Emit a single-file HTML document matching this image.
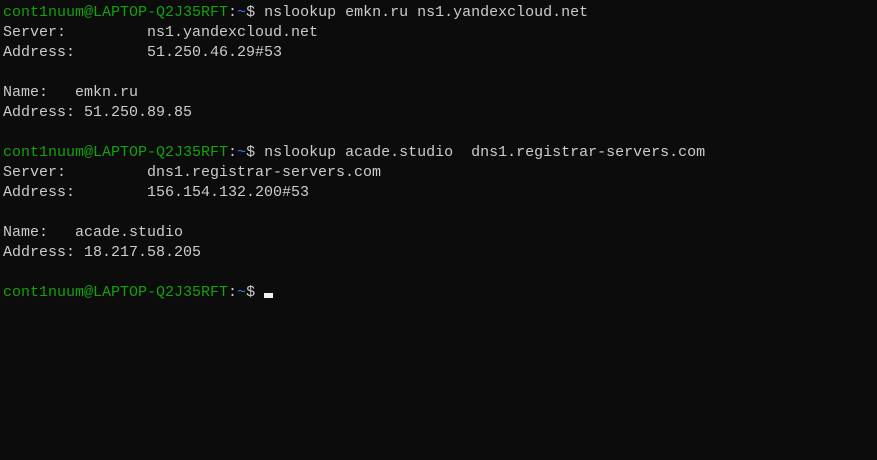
<!DOCTYPE html>
<html><head><style>
html,body{margin:0;padding:0;background:#0c0c0c;width:877px;height:460px;overflow:hidden}
pre{margin:0;position:absolute;left:3px;top:3px;font-family:"Liberation Mono",monospace;font-size:15px;line-height:20px;color:#cccccc;white-space:pre}
.g{color:#13a10e}.b{color:#3b78ff}
.cur{display:inline-block;width:9px;height:5px;background:#f2f2f2;vertical-align:-2px}
</style></head><body>
<pre><span class="g">cont1nuum@LAPTOP-Q2J35RFT</span>:<span class="b">~</span>$ nslookup emkn.ru ns1.yandexcloud.net
Server:         ns1.yandexcloud.net
Address:        51.250.46.29#53

Name:   emkn.ru
Address: 51.250.89.85

<span class="g">cont1nuum@LAPTOP-Q2J35RFT</span>:<span class="b">~</span>$ nslookup acade.studio  dns1.registrar-servers.com
Server:         dns1.registrar-servers.com
Address:        156.154.132.200#53

Name:   acade.studio
Address: 18.217.58.205

<span class="g">cont1nuum@LAPTOP-Q2J35RFT</span>:<span class="b">~</span>$ <span class="cur"></span></pre>
</body></html>
